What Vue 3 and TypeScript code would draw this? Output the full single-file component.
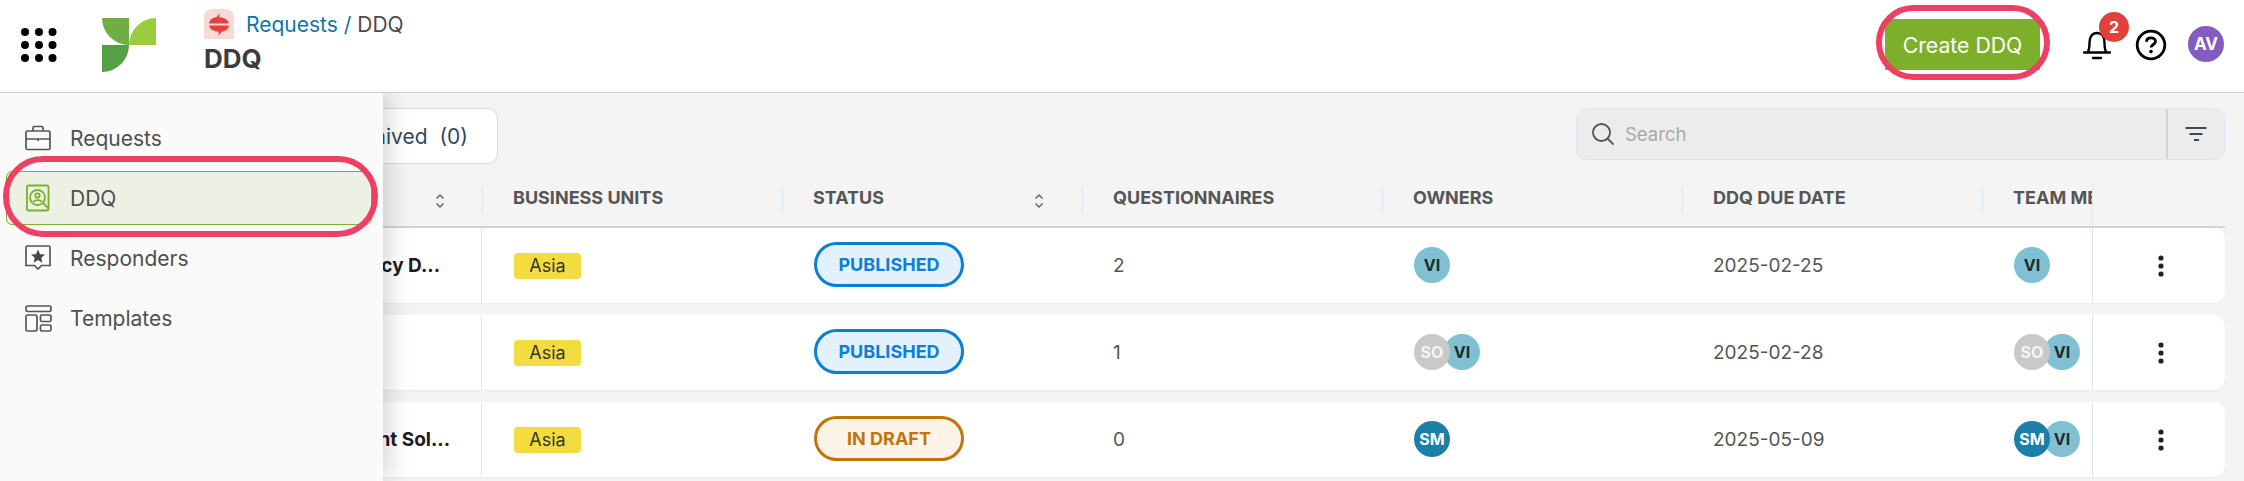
<script setup lang="ts">
interface Person { initials: string; tone: string }
interface Row {
  name: string
  nameClass: string
  unit: string
  status: string
  statusClass: string
  count: number
  owners: Person[]
  due: string
  team: Person[]
}
const vi: Person = { initials: 'VI', tone: 'tone-vi' }
const so: Person = { initials: 'SO', tone: 'tone-so' }
const sm: Person = { initials: 'SM', tone: 'tone-sm' }

const columns = ['Business Units', 'Status', 'Questionnaires', 'Owners', 'DDQ Due Date', 'Team Members']

const rows: Row[] = [
  { name: 'Privacy Policy D...', nameClass: 'name-a', unit: 'Asia', status: 'PUBLISHED', statusClass: 'published', count: 2, owners: [vi], due: '2025-02-25', team: [vi] },
  { name: 'Vendor', nameClass: 'name-b', unit: 'Asia', status: 'PUBLISHED', statusClass: 'published', count: 1, owners: [so, vi], due: '2025-02-28', team: [so, vi] },
  { name: 'Management Sol...', nameClass: 'name-c', unit: 'Asia', status: 'IN DRAFT', statusClass: 'draft', count: 0, owners: [sm], due: '2025-05-09', team: [sm, vi] },
]
const dots = [32, 45, 58].flatMap((y) => [25, 39, 52.500].map((x) => ({ x, y })))
</script>

<template>
  <div class="page">
    <header class="topbar">
      <svg class="apps" width="78" height="78" viewBox="0 0 78 78">
        <circle v-for="(d, i) in dots" :key="i" :cx="d.x" :cy="d.y" r="4" fill="#000" />
      </svg>
      <svg class="logo" width="54" height="54" viewBox="0 0 54 54">
        <path d="M0 0H27V27A27 27 0 0 1 0 0Z" fill="#6fae41" />
        <path d="M27 27A27 27 0 0 1 54 0V27Z" fill="#9bcb3f" />
        <path d="M0 27H27A27 27 0 0 1 0 54Z" fill="#559f45" />
      </svg>
      <div class="crumbs">
        <div class="crumb-line">
          <span class="crumb-icon">
            <svg width="30" height="30" viewBox="0 0 30 30">
              <path d="M5 14.500C5.500 11 8.500 8.600 12.300 8.300L15.500 4.300L15.300 8.300C20 8.400 24 10.500 25 14.500Z" fill="#e5403c" />
              <path d="M25 16.500C24.500 20 21.500 22.400 17.700 22.700L14.500 26.700L14.700 22.700C10 22.600 6 20.500 5 16.500Z" fill="#e5403c" />
            </svg>
          </span>
          <span class="crumb-link">Requests /</span>
          <span class="crumb-current">DDQ</span>
        </div>
        <div class="title">DDQ</div>
      </div>
      <div class="actions">
        <div class="cta-wrap">
          <button class="cta">Create DDQ</button>
          <span class="ring ring-cta"></span>
        </div>
        <div class="bell">
          <svg width="28" height="30" viewBox="0 0 28 30" fill="none" stroke="#000" stroke-width="2.400">
            <path d="M1 22.500H27M4.500 22.500C6.500 20 6.500 17 6.500 12.500C6.500 6.500 9.500 3 14 3C18.500 3 21.500 6.500 21.500 12.500C21.500 17 21.500 20 23.500 22.500" stroke-linecap="round" />
            <path d="M10 28H18" stroke-linecap="round" />
          </svg>
          <span class="badge">2</span>
        </div>
        <svg class="help" width="32" height="32" viewBox="0 0 32 32" fill="none">
          <circle cx="16" cy="16" r="13.800" stroke="#000" stroke-width="2.800" />
          <path d="M11.500 12.800C11.500 10.200 13.400 8.800 16 8.800C18.600 8.800 20.500 10.300 20.500 12.500C20.500 15.500 16 15.500 16 18.600" stroke="#000" stroke-width="2.800" />
          <circle cx="16" cy="22.600" r="1.800" fill="#000" />
        </svg>
        <span class="me">AV</span>
      </div>
    </header>

    <main class="content">
      <div class="toolbar">
        <div class="tabs">
          <button class="tab">Archived&nbsp;&nbsp;(0)</button>
        </div>
        <div class="search">
          <svg width="24" height="24" viewBox="0 0 24 24" fill="none" stroke="#555" stroke-width="1.800">
            <circle cx="10.500" cy="10.500" r="8.500" />
            <path d="M16.600 16.600L22 22" stroke-linecap="round" />
          </svg>
          <span class="placeholder">Search</span>
          <span class="filter">
            <svg width="22" height="16" viewBox="0 0 22 16" fill="none" stroke="#3a4a58" stroke-width="2">
              <path d="M0.500 2H21.500M4.500 8H17.500M9 14H14" />
            </svg>
          </span>
        </div>
      </div>

      <div class="grid head">
        <div class="cell hcell first">
          <span class="hlabel">DDQ Name</span>
          <svg class="sort" width="10" height="16" viewBox="0 0 10 16" fill="none" stroke="#666" stroke-width="1.500">
            <path d="M1.500 5.500L5 2L8.500 5.500M1.500 10.500L5 14L8.500 10.500" />
          </svg>
        </div>
        <div v-for="c in columns" :key="c" class="cell hcell">
          <span class="hlabel">{{ c }}</span>
          <svg v-if="c === 'Status'" class="sort" width="10" height="16" viewBox="0 0 10 16" fill="none" stroke="#666" stroke-width="1.500">
            <path d="M1.500 5.500L5 2L8.500 5.500M1.500 10.500L5 14L8.500 10.500" />
          </svg>
        </div>
        <div class="cell hcell tail"></div>
      </div>

      <div v-for="r in rows" :key="r.due" class="grid row">
        <div class="cell first name" :class="r.nameClass">{{ r.name }}</div>
        <div class="cell"><span class="unit">{{ r.unit }}</span></div>
        <div class="cell"><span class="pill" :class="r.statusClass">{{ r.status }}</span></div>
        <div class="cell plain">{{ r.count }}</div>
        <div class="cell">
          <span v-for="(p, i) in r.owners" :key="i" class="person" :class="p.tone">{{ p.initials }}</span>
        </div>
        <div class="cell plain">{{ r.due }}</div>
        <div class="cell">
          <span v-for="(p, i) in r.team" :key="i" class="person" :class="p.tone">{{ p.initials }}</span>
        </div>
        <div class="cell tail kebab">
          <svg width="6" height="22" viewBox="0 0 6 22" fill="#222">
            <circle cx="3" cy="3" r="2.600" />
            <circle cx="3" cy="11" r="2.600" />
            <circle cx="3" cy="19" r="2.600" />
          </svg>
        </div>
      </div>
    </main>

    <nav class="drawer">
      <a class="item">
        <span class="slot">
          <svg width="26" height="26" viewBox="0 0 26 26" fill="none" stroke="#555" stroke-width="1.700">
            <rect x="1" y="6" width="24" height="18.500" rx="1.500" />
            <path d="M8 6V3C8 2 8.800 1.500 9.500 1.500H16.500C17.300 1.500 18 2 18 3V6M1 14H25" />
            <path d="M13 13.500V16" />
          </svg>
        </span>
        Requests
      </a>
      <a class="item active">
        <span class="slot">
          <svg width="26" height="28" viewBox="0 0 26 28" fill="none" stroke="#7daf2a" stroke-width="1.800">
            <rect x="2" y="1.500" width="21.500" height="25" rx="1.500" />
            <circle cx="12.500" cy="13.500" r="7.500" />
            <circle cx="12.500" cy="11.500" r="2.200" />
            <path d="M8.500 18C9 15.500 16 15.500 16.500 18M18 19L24 25" />
          </svg>
        </span>
        DDQ
      </a>
      <a class="item">
        <span class="slot">
          <svg width="26" height="26" viewBox="0 0 26 26" fill="none" stroke="#555" stroke-width="1.700">
            <path d="M2.500 1H23.500C24.300 1 25 1.700 25 2.500V20.500H16.500L13 24L9.500 20.500H1V2.500C1 1.700 1.700 1 2.500 1Z" />
            <path d="M13 4.500L15 9.200L20 9.600L16.200 12.800L17.400 17.700L13 15L8.600 17.700L9.800 12.800L6 9.600L11 9.200Z" fill="#444" stroke="none" />
          </svg>
        </span>
        Responders
      </a>
      <a class="item">
        <span class="slot">
          <svg width="27" height="27" viewBox="0 0 27 27" fill="none" stroke="#555" stroke-width="1.700">
            <rect x="1" y="1" width="25" height="5.500" rx="1.500" />
            <rect x="1" y="10" width="11" height="16" rx="1.500" />
            <rect x="15.500" y="10" width="10.500" height="6.500" rx="1.500" />
            <rect x="15.500" y="20" width="10.500" height="6" rx="1.500" />
          </svg>
        </span>
        Templates
      </a>
      <span class="ring ring-nav"></span>
    </nav>
  </div>
</template>

<style>
html, body { margin: 0; background: #f4f4f4; }
</style>

<style scoped>
.page {
  position: relative;
  width: 2244px;
  height: 481px;
  overflow: hidden;
  background: #f4f4f4;
  font-family: Inter, "Liberation Sans", sans-serif;
  color: #444;
}
.topbar {
  display: flex;
  align-items: flex-start;
  height: 92px;
  box-sizing: border-box;
  background: #fff;
  padding-right: 20px;
  box-shadow: 0 1px 0 #cfcfcf;
  position: relative;
  z-index: 2;
}
.apps { flex: none; }
.logo { flex: none; margin: 18px 0 0 24px; }
.crumbs { margin-left: 48px; padding-top: 9px; }
.crumb-line { display: flex; align-items: center; font-size: 21px; height: 30px; }
.crumb-icon { display: flex; width: 30px; height: 30px; background: #fadad7; border-radius: 8px 8px 0 0; margin-right: 12px; }
.crumb-link { color: #0f75a8; margin-right: 6px; }
.crumb-current { color: #4a4a4a; }
.title { font-size: 26px; font-weight: 700; color: #3c3c3c; margin-top: 5px; line-height: 30px; }
.actions { margin-left: auto; display: flex; align-items: flex-start; }
.cta-wrap { position: relative; margin-top: 19px; }
.cta {
  display: block;
  width: 155px;
  height: 51px;
  border: 0;
  padding: 0;
  background: #7daf2a;
  color: #fff;
  font: 400 21.250px Inter, sans-serif;
}
.ring { position: absolute; box-sizing: border-box; border: 6px solid #ee4065; pointer-events: none; border-radius: 40px; }
.ring-cta { left: -9px; right: -10px; top: -14px; bottom: -10px; }
.bell { position: relative; margin: 30px 0 0 43px; width: 28px; height: 30px; }
.badge {
  position: absolute;
  left: 16px;
  top: -18px;
  width: 30px;
  height: 30px;
  border-radius: 50%;
  background: #e3403d;
  color: #fff;
  font-size: 16px;
  font-weight: 700;
  display: flex;
  align-items: center;
  justify-content: center;
}
.help { margin: 29px 0 0 24px; }
.me {
  margin: 26px 0 0 21px;
  width: 36px;
  height: 36px;
  border-radius: 50%;
  background: #845cc0;
  color: #fff;
  font-size: 17px;
  font-weight: 700;
  display: flex;
  align-items: center;
  justify-content: center;
}
.content { padding: 16px 19px 0 20px; }
.toolbar { display: flex; justify-content: space-between; align-items: flex-start; height: 64px; }
.tabs { display: flex; margin-left: 200px; }
.tab {
  width: 278px;
  height: 56px;
  box-sizing: border-box;
  background: #fff;
  border: 1px solid #d9d9d9;
  border-radius: 10px;
  font: 400 21px Inter, sans-serif;
  color: #33475b;
  text-align: right;
  padding: 0 29px 0 0;
}
.search {
  width: 649px;
  height: 52px;
  box-sizing: border-box;
  display: flex;
  align-items: center;
  background: #ececec;
  border: 1px solid #dfe5ee;
  border-radius: 10px;
  padding-left: 14px;
}
.placeholder { margin-left: 10px; font-size: 18.500px; color: #a9a9a9; }
.filter {
  margin-left: auto;
  width: 58px;
  height: 100%;
  display: flex;
  align-items: center;
  justify-content: center;
  border-left: 2px solid #d4d4d4;
  box-sizing: border-box;
}
.grid {
  display: grid;
  grid-template-columns: 462px repeat(5, 300px) 110px 133px;
  width: 2205px;
}
.head { height: 56px; border-bottom: 2px solid #d2d2d2; box-sizing: border-box; align-items: start; }
.cell {
  display: flex;
  align-items: center;
  box-sizing: border-box;
  padding-left: 32px;
  overflow: hidden;
  white-space: nowrap;
}
.hcell {
  position: relative;
  height: 28px;
  margin-top: 14px;
  padding-left: 30px;
  font-size: 18px;
  font-weight: 700;
  color: #555;
  text-transform: uppercase;
  border-left: 1px solid #dfe5ee;
}
.hcell.first { border-left: 0; padding-left: 200px; }
.hcell.tail { border-left: 1px solid #e6e6e6; height: 44px; margin-top: 11px; }
.hlabel { margin-top: -5px; }
.sort { position: absolute; right: 38px; top: 7px; }
.hcell.first .sort { right: 37px; }
.row {
  height: 75px;
  background: #fff;
  border-radius: 0 12px 12px 0;
  margin-bottom: 12px;
  box-shadow: 0 1px 2px rgba(0, 0, 0, 0.04);
}
.name {
  font-size: 19px;
  font-weight: 700;
  color: #1d1d1d;
  border-right: 1px solid #dfe5ee;
}
.name-a { justify-content: flex-end; padding-right: 41px; }
.name-b { justify-content: flex-start; padding-left: 200px; }
.name-c { justify-content: flex-end; padding-right: 31px; }
.unit {
  display: flex;
  align-items: center;
  justify-content: center;
  width: 67px;
  height: 26px;
  border-radius: 4px;
  background: #f3dc3f;
  font-size: 18px;
  color: #333;
}
.pill {
  display: flex;
  align-items: center;
  justify-content: center;
  width: 150px;
  height: 45px;
  box-sizing: border-box;
  border-radius: 23px;
  border-width: 3px;
  border-style: solid;
  font-size: 18px;
  font-weight: 700;
  margin-top: -2px;
}
.published { border-color: #0a7fd6; background: #e3f1fd; color: #0a7fd6; }
.draft { border-color: #c0750c; background: #fdf3e6; color: #c0750c; }
.plain { font-size: 19px; color: #555; padding-left: 31px; }
.person {
  position: relative;
  flex: none;
  width: 36px;
  height: 36px;
  border-radius: 50%;
  display: flex;
  align-items: center;
  justify-content: center;
  font-size: 16px;
  font-weight: 700;
  margin-top: -1px;
}
.person + .person { margin-left: -6px; }
.person:first-child { z-index: 1; }
.tone-vi { background: #7fc1d3; color: #1f2a30; }
.tone-so { background: #c9c9c9; color: #f5f5f5; }
.tone-sm { background: #1b7fa6; color: #fff; }
.tail { border-left: 1px solid #dfe5ee; }
.kebab { padding-left: 65px; }
.drawer {
  position: absolute;
  left: 0;
  top: 93px;
  bottom: 0;
  width: 383px;
  box-sizing: border-box;
  padding-top: 18px;
  background: #fafafa;
  box-shadow: 6px 0 22px rgba(0, 0, 0, 0.16);
  display: flex;
  flex-direction: column;
  gap: 6px;
}
.item {
  display: flex;
  align-items: center;
  height: 54px;
  box-sizing: border-box;
  margin: 0 11px 0 6px;
  padding-left: 19px;
  font-size: 21px;
  color: #4f4f4f;
}
.slot { flex: none; width: 45px; display: flex; align-items: center; }
.item.active {
  background: #edf1e3;
  border: 1px solid #7daf2a;
  border-radius: 6px;
  padding-left: 18px;
}
.ring-nav { left: 3px; width: 375px; top: 63px; height: 81px; }
</style>
